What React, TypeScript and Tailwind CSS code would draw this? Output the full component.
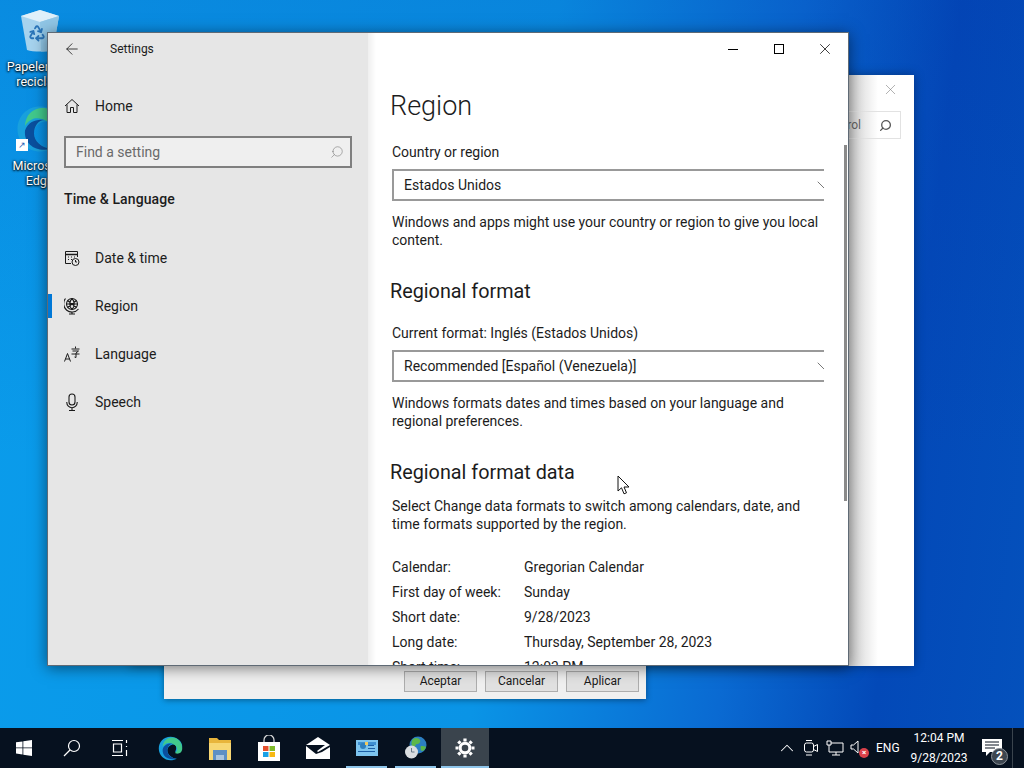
import { ArrowLeft, ChevronDown, ChevronUp, Recycle, Search, X } from "lucide-react";

const segoe = "font-['Roboto','Noto_Sans',sans-serif]";

function DateIcon() {
  return (
    <svg width="16" height="16" viewBox="0 0 16 16" fill="none" stroke="#1a1a1a" strokeWidth="1">
      <path d="M7 13.500H1.500V1.500h12V7" />
      <path d="M1.500 4.500h12" strokeWidth="1.500" />
      <path d="M4 7h1M7 7h1M10 7h1M4 9.500h1M7 9.500h1" />
      <circle cx="11.500" cy="12" r="3.500" fill="#e6e6e6" />
      <path d="M11.500 10v2h1.500" />
    </svg>
  );
}

function GlobeIcon() {
  return (
    <svg width="16" height="18" viewBox="0 0 16 18" fill="none" stroke="#1a1a1a" strokeWidth="1.100">
      <circle cx="8" cy="7" r="5.500" />
      <path d="M3.500 3.500l9 7M12.500 3.500l-9 7M2.500 7h11M8 1.500c-3 3-3 8 0 11M8 1.500c3 3 3 8 0 11" />
      <path d="M1.500 1.500a8 8 0 0 0 13 10.500M8 15v2M5 17h6" />
    </svg>
  );
}

function LangIcon() {
  return (
    <svg width="16" height="16" viewBox="0 0 16 16" fill="none" stroke="#1a1a1a" strokeWidth="1">
      <path d="M0.500 15.500l3-8 3 8M1.500 13h4" />
      <path d="M7.500 3h8M11.500 0.500v2M8.500 5h6l-2.500 2v4.500l-1.500-.5M7.500 8h8" />
    </svg>
  );
}

function MicIcon() {
  return (
    <svg width="16" height="18" viewBox="0 0 16 18" fill="none" stroke="#1a1a1a" strokeWidth="1.100">
      <rect x="5" y="1" width="6" height="11" rx="3" />
      <path d="M2.800 9v.5a5.200 5.200 0 0 0 10.400 0V9M8 15v2.500M5 17.500h6" />
    </svg>
  );
}

function NavItem({ icon, label }: { icon: React.ReactNode; label: string }) {
  return (
    <div className="flex items-center h-12 pl-4">
      <div className="w-4 flex justify-center shrink-0">{icon}</div>
      <span className="ml-[15px] text-[14px] text-[#1c1c1c]">{label}</span>
    </div>
  );
}

function Dropdown({ value }: { value: string }) {
  return (
    <div className="h-8 border-y-2 border-l-2 border-[#999999] flex items-center pl-[10px] justify-between text-[14px] text-[#1c1c1c] overflow-hidden">
      <span>{value}</span>
      <ChevronDown size={24} strokeWidth={0.800} className="text-[#555555] -mr-[12px] shrink-0" />
    </div>
  );
}

function FormatRow({ label, value }: { label: string; value: string }) {
  return (
    <div className="flex h-[25px] items-center text-[14px] text-[#1c1c1c] shrink-0">
      <span className="w-[132px]">{label}</span>
      <span>{value}</span>
    </div>
  );
}

function DesktopIcon({ top, gap, lines, children }: { top: string; gap: string; lines: string[]; children: React.ReactNode }) {
  return (
    <div className={`absolute left-[1.500px] w-[76px] flex flex-col items-center ${top}`}>
      {children}
      <div className={`text-[12.5px] leading-[15px] text-white text-center [text-shadow:0_0_3px_#000,0_1px_2px_#000] ${gap}`}>
        {lines.map((l) => (
          <div key={l}>{l}</div>
        ))}
      </div>
    </div>
  );
}

function EdgeLogo({ size }: { size: number }) {
  return (
    <svg width={size} height={size} viewBox="0 0 32 32">
      <path d="M16 1C7 1 1 8 1 16c0 9 7 15 15 15 3 0 6-1 8-2-6 0-12-5-12-10 0-5 4-8 8-8 4 0 4 6 2 9 3 2 9 0 9-7C31 7 24 1 16 1z" fill="#18a0dd" />
      <path d="M6 17C8 11 14 9 19 10 15 10 12 14 12 19 12 24 17 29 24 29 15 32 5 27 6 17z" fill="#0a4f9e" />
      <path d="M8 7C11 3 15 2 18 2 25 2 31 8 31 16 31 21 27 23 24 22.500 22.500 22.300 22 21.500 22 21 24 20 25 18 24 15 23 11 17 8 12 9 9 10 7 12 6 14 6 11 7 9 8 7z" fill="#42c98c" />
    </svg>
  );
}

function RecycleBin() {
  return (
    <div className="relative w-[38px] h-[42px]">
      <svg width="38" height="42" viewBox="0 0 38 42">
        <path d="M0 6L19 0 38 6 32 40C26 42 12 42 6 40z" fill="#a6d3ee" />
        <path d="M0 6L19 0 38 6 19 12z" fill="#dff0fa" />
        <path d="M19 12L38 6 32 40C28 41 24 41.500 20 41.500z" fill="#90c6e6" />
      </svg>
      <Recycle size={18} strokeWidth={2.400} className="absolute left-[7px] top-[14px] text-[#2a74b8]" />
    </div>
  );
}

function Taskbar() {
  return (
    <div className="absolute left-0 right-0 bottom-0 h-10 bg-[#06111f] flex items-stretch text-white">
      <div className="w-12 flex items-center justify-center">
        <svg width="16" height="16" viewBox="0 0 16 16" fill="#fff">
          <path d="M0 2.300L6.500 1.400V7.500H0zM7.300 1.300L16 0V7.500H7.300zM0 8.300H6.500V14.500L0 13.600zM7.300 8.300H16V16L7.300 14.700z" />
        </svg>
      </div>
      <div className="w-12 flex items-center justify-center">
        <svg width="18" height="18" viewBox="0 0 18 18" fill="none" stroke="#fff" strokeWidth="1.200">
          <circle cx="11" cy="7" r="5.500" />
          <path d="M7 11l-6 6" />
        </svg>
      </div>
      <div className="w-[50px] flex items-center justify-start pl-[15px]">
        <svg width="18" height="16" viewBox="0 0 18 16" fill="none" stroke="#fff" strokeWidth="1.200">
          <path d="M1 0.500h11M1 15.500h11M2.500 4h8v8h-8zM15.500 0v3M15.500 6v1M15.500 10v6" />
        </svg>
      </div>
      <div className="w-[49px] flex items-center justify-center">
        <EdgeLogo size={25} />
      </div>
      <div className="w-[49px] flex items-center justify-center">
        <svg width="22" height="24" viewBox="0 0 22 24">
          <path d="M0 2h8l2 2h12v20H0z" fill="#e8b53c" />
          <path d="M0 7h22v17H0z" fill="#f7d774" />
          <path d="M4 14h14v10h-3v-5H7v5H4z" fill="#5d8fc4" />
          <path d="M7 19h8v5H7z" fill="#a9c4de" />
        </svg>
      </div>
      <div className="w-[49px] flex items-center justify-center">
        <svg width="24" height="26" viewBox="0 0 24 26">
          <path d="M7 8V5a5 5 0 0 1 10 0v3" fill="none" stroke="#ddd" strokeWidth="1.200" />
          <path d="M1 7h22v19H1z" fill="#fff" />
          <path d="M6 11h5.500v5H6z" fill="#e4502e" />
          <path d="M12.500 11H18v5h-5.500z" fill="#7fba2a" />
          <path d="M6 17h5.500v5H6z" fill="#18a0e6" />
          <path d="M12.500 17H18v5h-5.500z" fill="#f7b813" />
        </svg>
      </div>
      <div className="w-[49px] flex items-center justify-center">
        <svg width="24" height="22" viewBox="0 0 24 22" fill="#fff">
          <path d="M12 0l12 8-12 7-1-1 8-6L0 8z" />
          <path d="M0 9l10 8 6-2 8-5v12H0z" />
        </svg>
      </div>
      <div className="relative w-[49px] flex items-center justify-center">
        <svg width="22" height="18" viewBox="0 0 22 18">
          <path d="M0 1h22v16H0z" fill="#7dc4ee" />
          <path d="M2 3h18v3H2z" fill="#3e8fd1" />
          <circle cx="7" cy="7" r="3" fill="#2f7fbe" />
          <path d="M12 6h6v1h-6zM12 9h7v1h-7zM2 12h17v1H2z" fill="#1c5fa6" />
          <path d="M9 3h3v3H9z" fill="#f4c95d" />
        </svg>
        <div className="absolute left-[4px] right-[4px] bottom-0 h-[2px] bg-[#8ec5ea]" />
      </div>
      <div className="relative w-[49px] flex items-center justify-center">
        <svg width="24" height="24" viewBox="0 0 24 24">
          <circle cx="14" cy="9" r="8.500" fill="#2c7fc2" />
          <path d="M9 3c3-2 6-1 7 1s-1 4-3 4-1 3-3 3-4-4-1-8zM17 10c2 0 4 0 5 1-1 3-3 4-4 4s-2-4-1-5z" fill="#5cb84a" />
          <circle cx="7.500" cy="16" r="6.500" fill="#d9dde0" />
          <path d="M7.500 12v4h3" fill="none" stroke="#6a7a88" strokeWidth="1" />
        </svg>
        <div className="absolute left-[4px] right-[4px] bottom-0 h-[2px] bg-[#8ec5ea]" />
      </div>
      <div className="relative w-12 ml-px bg-[#3a444d] flex items-center justify-center">
        <svg width="20" height="20" viewBox="0 0 20 20" fill="none" stroke="#fff">
          <circle cx="10" cy="10" r="4.800" strokeWidth="3" />
          <path strokeWidth="3.200" d="M10 0.500v3M10 16.500v3M0.500 10h3M16.500 10h3M3.300 3.300l2.100 2.100M14.600 14.600l2.100 2.100M3.300 16.700l2.100-2.100M14.600 5.400l2.100-2.100" />
        </svg>
        <div className="absolute left-0 right-0 bottom-0 h-[2px] bg-[#8ec5ea]" />
      </div>
      <div className="flex-1" />
      <div className="flex items-center">
        <ChevronUp size={22} strokeWidth={1.100} className="mr-[5px]" />
        <svg width="16" height="18" viewBox="0 0 16 18" fill="none" stroke="#fff" strokeWidth="1" className="mr-[7px]">
          <rect x="1.500" y="4" width="9" height="9" rx="2" />
          <path d="M10.500 7.500l4-2v7l-4-2M3 1.500h6M3 16h6" />
        </svg>
        <svg width="18" height="16" viewBox="0 0 18 16" fill="none" stroke="#fff" strokeWidth="1" className="mr-[6px]">
          <path d="M1 1h4v4H1zM5 3h12v9H3V5M10 12v3M6 15h8" />
        </svg>
        <div className="relative w-[19px] h-4 mr-[7px]">
          <svg width="12" height="14" viewBox="0 0 12 14" fill="none" stroke="#fff" strokeWidth="1">
            <path d="M1 5h2.500L8 1v12L3.500 9H1z" />
          </svg>
          <div className="absolute right-0 bottom-[-2px] w-[10px] h-[10px] rounded-full bg-[#d9414a] text-[8px] leading-[10px] text-center font-bold">×</div>
        </div>
        <span className="text-[12px] w-[25px]">ENG</span>
        <div className="flex flex-col items-center w-[72px] text-[12px] leading-[20px] ml-[2px]">
          <span>12:04 PM</span>
          <span>9/28/2023</span>
        </div>
        <div className="relative w-[40px] h-10 flex items-center justify-center -ml-[3px]">
          <svg width="20" height="18" viewBox="0 0 20 18" fill="#fff">
            <path d="M0 0h20v13H8l-4 4v-4H0z" />
            <path d="M3 3h14M3 6h14M3 9h10" stroke="#06111f" strokeWidth="1" />
          </svg>
          <div className="absolute right-[4px] bottom-[3px] w-[17px] h-[17px] rounded-full bg-[#3d4650] border border-[#8a9097] text-[12px] leading-[15px] text-center font-bold">2</div>
        </div>
        <div className="w-[12px] h-10 border-l border-[#3a444d]" />
      </div>
    </div>
  );
}

export default function App() {
  return (
    <div className={`relative w-[1024px] h-[768px] overflow-hidden bg-[linear-gradient(180deg,rgba(0,40,160,0.14),rgba(0,40,160,0)_60%),linear-gradient(97deg,#0a9ceb_0%,#0a94e6_50%,#0a6ad2_72%,#0349b8_86%,#0451bc_100%)] ${segoe}`}>
      <DesktopIcon top="top-[10px]" gap="mt-[7px]" lines={["Papelera de", "reciclaje"]}>
        <RecycleBin />
      </DesktopIcon>
      <DesktopIcon top="top-[105px]" gap="mt-[5px]" lines={["Microsoft", "Edge"]}>
        <div className="relative">
          <EdgeLogo size={48} />
          <div className="absolute left-0 bottom-[2px] w-[12px] h-[12px] bg-white text-[9px] leading-[12px] text-center text-[#1f5fb4]">↗</div>
        </div>
      </DesktopIcon>

      {/* control panel window behind */}
      <div className="absolute left-[130px] top-[75px] w-[784px] h-[591px] bg-white shadow-[0_0_10px_rgba(0,0,0,0.35)]">
        <div className="absolute left-[718px] top-0 bottom-0 w-[30px] bg-[linear-gradient(90deg,#d0d0d0,#ffffff)]" />
        <X size={17} strokeWidth={0.800} className="absolute right-[15px] top-[6px] text-[#777777]" />
        <div className="absolute left-[600px] top-[36px] w-[171px] h-[28px] border border-[#e2e2e2] flex items-center justify-end pr-[8px] text-[12px] text-[#666666]">
          <span className="mr-[18px]">Control</span>
          <Search size={13} strokeWidth={2.400} className="text-[#555555] -scale-x-100" />
        </div>
      </div>

      {/* region dialog behind */}
      <div className="absolute left-[164px] top-[560px] w-[482px] h-[139px] bg-[#f0f0f0] shadow-[0_1px_6px_rgba(0,0,0,0.4)] flex items-end justify-end gap-2 pr-[7px] pb-[7px]">
        {["Aceptar", "Cancelar", "Aplicar"].map((b) => (
          <div key={b} className="w-[73px] h-[21px] bg-[#e1e1e1] border border-[#adadad] text-[12px] leading-[19px] text-center text-[#1a1a1a]">
            {b}
          </div>
        ))}
      </div>

      {/* settings window */}
      <div className="absolute left-[47px] top-[32px] w-[802px] h-[634px] border border-[#5f6a75] bg-white flex shadow-[0_2px_14px_rgba(0,0,0,0.5)]">
        <div className="w-[320px] h-full bg-[#e6e6e6] flex flex-col shrink-0">
          <div className="h-8 flex items-center pl-[15px] shrink-0">
            <ArrowLeft size={18} strokeWidth={1.100} className="text-[#1c1c1c]" />
            <span className="ml-[29px] text-[12px] text-[#1c1c1c]">Settings</span>
          </div>
          <div className="h-12 flex items-center pl-4 mt-[17px] shrink-0">
            <svg width="16" height="16" viewBox="0 0 16 16" fill="none" stroke="#1c1c1c" strokeWidth="1">
              <path d="M1 8L8 1.500 15 8M3 6.500V14.500H6.500V9.500H9.500V14.500H13V6.500" />
            </svg>
            <span className="ml-[15px] text-[14px] text-[#1c1c1c]">Home</span>
          </div>
          <div className="mx-4 mt-[6px] h-8 border-2 border-[#7f7f7f] bg-[#efefef] flex items-center justify-between pl-[10px] pr-[6px] shrink-0">
            <span className="text-[14px] text-[#6a6a6a]">Find a setting</span>
            <Search size={14} strokeWidth={0.900} className="text-[#6a6a6a] -scale-x-100" />
          </div>
          <div className="pl-4 mt-[21px] text-[14px] font-medium tracking-[0.1px] text-[#1c1c1c] leading-5 shrink-0">Time &amp; Language</div>
          <div className="mt-[25px] flex flex-col">
            <NavItem icon={<DateIcon />} label="Date & time" />
            <div className="relative">
              <div className="absolute left-0 top-3 w-1 h-6 bg-[#0078d7]" />
              <NavItem icon={<GlobeIcon />} label="Region" />
            </div>
            <NavItem icon={<LangIcon />} label="Language" />
            <NavItem icon={<MicIcon />} label="Speech" />
          </div>
        </div>

        <div className="relative flex-1 h-full overflow-hidden bg-[linear-gradient(90deg,#efefef_0px,#ffffff_8px)]">
          <div className="absolute right-0 top-0 flex h-8 z-10">
            <div className="w-[46px] flex items-center justify-center"><div className="w-[10px] h-px bg-black" /></div>
            <div className="w-[46px] flex items-center justify-center"><div className="w-[10px] h-[10px] border border-black" /></div>
            <div className="w-[46px] flex items-center justify-center"><X size={18} strokeWidth={1} className="text-black" /></div>
          </div>
          <div className="absolute right-[1px] top-[112px] w-[3px] h-[356px] bg-[#8a8a8a]" />
          <div className="w-[456px] pl-6 pt-[53px] flex flex-col h-full">
            <h1 className="text-[27px] leading-10 -ml-[2px] text-[#1c1c1c] font-light shrink-0">Region</h1>
            <div className="mt-[16px] text-[14px] leading-5 text-[#1c1c1c]">Country or region</div>
            <div className="mt-[7px]"><Dropdown value="Estados Unidos" /></div>
            <p className="mt-[12px] text-[14px] leading-[18px] text-[#1c1c1c] shrink-0">Windows and apps might use your country or region to give you local content.</p>
            <h2 className="mt-[29px] text-[19.8px] leading-7 -ml-[2px] text-[#1c1c1c] font-normal shrink-0">Regional format</h2>
            <div className="mt-[17px] text-[14px] leading-5 text-[#1c1c1c]">Current format: Inglés (Estados Unidos)</div>
            <div className="mt-[7px]"><Dropdown value="Recommended [Español (Venezuela)]" /></div>
            <p className="mt-[12px] text-[14px] leading-[18px] text-[#1c1c1c] shrink-0">Windows formats dates and times based on your language and regional preferences.</p>
            <h2 className="mt-[29px] text-[19.8px] leading-7 -ml-[2px] text-[#1c1c1c] font-normal shrink-0">Regional format data</h2>
            <p className="mt-[10px] text-[14px] leading-[18px] text-[#1c1c1c] shrink-0">Select Change data formats to switch among calendars, date, and time formats supported by the region.</p>
            <div className="mt-[22px] flex flex-col">
              <FormatRow label="Calendar:" value="Gregorian Calendar" />
              <FormatRow label="First day of week:" value="Sunday" />
              <FormatRow label="Short date:" value="9/28/2023" />
              <FormatRow label="Long date:" value="Thursday, September 28, 2023" />
              <FormatRow label="Short time:" value="12:03 PM" />
            </div>
          </div>
        </div>
      </div>

      <Taskbar />

      {/* mouse pointer */}
      <svg className="absolute left-[617px] top-[475px]" width="13" height="20" viewBox="0 0 13 20">
        <path d="M1 1v15l3.500-3.200 2.500 6 2.500-1-2.500-5.800H12z" fill="#fff" stroke="#111" strokeWidth="1" />
      </svg>
    </div>
  );
}
